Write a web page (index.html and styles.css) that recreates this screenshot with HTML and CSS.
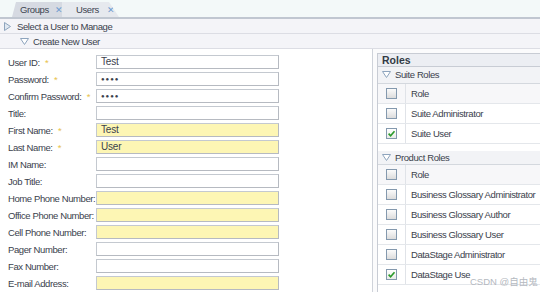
FILE: index.html
```html
<!DOCTYPE html>
<html>
<head>
<meta charset="utf-8">
<link rel="stylesheet" href="styles.css">
</head>
<body>
<div class="tabbar">
  <div class="tab tab-inactive"><span class="tab-label">Groups</span><span class="tab-x">✕</span></div>
  <div class="tab tab-active"><span class="tab-label">Users</span><span class="tab-x">✕</span></div>
</div>
<div class="bar bar-select"><svg class="tri-svg" width="7" height="9" viewBox="0 0 7 9"><path d="M0.5 0.5 L6.5 4.5 L0.5 8.5 Z" fill="#dfe7f1" stroke="#8ea4bd" stroke-width="1"/></svg><span>Select a User to Manage</span></div>
<div class="bar bar-create"><svg class="tri-svg" width="9" height="7" viewBox="0 0 9 7"><path d="M0.5 0.5 L8.5 0.5 L4.5 6.5 Z" fill="#ffffff" stroke="#8ea4bd" stroke-width="1"/></svg><span>Create New User</span></div>
<div class="main">
  <div class="form-panel">
    <div class="form">
      <label class="lbl">User ID: <span class="req">*</span></label><div class="inp">Test</div>
      <label class="lbl">Password: <span class="req">*</span></label><div class="inp dots">●●●●</div>
      <label class="lbl">Confirm Password: <span class="req">*</span></label><div class="inp dots">●●●●</div>
      <label class="lbl">Title:</label><div class="inp"></div>
      <label class="lbl">First Name: <span class="req">*</span></label><div class="inp yellow">Test</div>
      <label class="lbl">Last Name: <span class="req">*</span></label><div class="inp yellow">User</div>
      <label class="lbl">IM Name:</label><div class="inp"></div>
      <label class="lbl">Job Title:</label><div class="inp"></div>
      <label class="lbl">Home Phone Number:</label><div class="inp yellow"></div>
      <label class="lbl">Office Phone Number:</label><div class="inp yellow"></div>
      <label class="lbl">Cell Phone Number:</label><div class="inp yellow"></div>
      <label class="lbl">Pager Number:</label><div class="inp"></div>
      <label class="lbl">Fax Number:</label><div class="inp"></div>
      <label class="lbl">E-mail Address:</label><div class="inp yellow"></div>
    </div>
  </div>
  <div class="roles-panel">
    <div class="roles">
      <div class="roles-title">Roles</div>
      <div class="group-head group-suite"><svg class="tri-svg" width="9" height="7" viewBox="0 0 9 7"><path d="M0.5 0.5 L8.5 0.5 L4.5 6.5 Z" fill="#ffffff" stroke="#8ea4bd" stroke-width="1"/></svg>Suite Roles</div>
      <div class="row row-head"><div class="cbcell"><span class="cb"></span></div><div class="name">Role</div></div>
      <div class="row"><div class="cbcell"><span class="cb"></span></div><div class="name">Suite Administrator</div></div>
      <div class="row"><div class="cbcell"><span class="cb checked"><svg viewBox="0 0 9 9" width="9" height="9"><path d="M1.6 4.6 L3.6 6.8 L7.5 2.2" fill="none" stroke="#2b9a2b" stroke-width="1.6"/></svg></span></div><div class="name">Suite User</div></div>
      <div class="spacer"></div>
      <div class="group-head"><svg class="tri-svg" width="9" height="7" viewBox="0 0 9 7"><path d="M0.5 0.5 L8.5 0.5 L4.5 6.5 Z" fill="#ffffff" stroke="#8ea4bd" stroke-width="1"/></svg>Product Roles</div>
      <div class="row row-head"><div class="cbcell"><span class="cb"></span></div><div class="name">Role</div></div>
      <div class="row"><div class="cbcell"><span class="cb"></span></div><div class="name">Business Glossary Administrator</div></div>
      <div class="row"><div class="cbcell"><span class="cb"></span></div><div class="name">Business Glossary Author</div></div>
      <div class="row"><div class="cbcell"><span class="cb"></span></div><div class="name">Business Glossary User</div></div>
      <div class="row"><div class="cbcell"><span class="cb"></span></div><div class="name">DataStage Administrator</div></div>
      <div class="row"><div class="cbcell"><span class="cb checked"><svg viewBox="0 0 9 9" width="9" height="9"><path d="M1.6 4.6 L3.6 6.8 L7.5 2.2" fill="none" stroke="#2b9a2b" stroke-width="1.6"/></svg></span></div><div class="name name-last">DataStage Use</div></div>
    </div>
    <div class="watermark">CSDN @自由鬼</div>
  </div>
</div>
</body>
</html>
```
FILE: styles.css
```css
html, body {
  margin: 0;
  padding: 0;
  width: 540px;
  height: 292px;
  overflow: hidden;
  background: #ffffff;
  font-family: "Liberation Sans", Arial, sans-serif;
  font-size: 9.5px;
  letter-spacing: -0.4px;
  color: #3a414c;
}

.tabbar {
  height: 17px;
  background: #f3f9f9;
  border-bottom: 2px solid #c0c7d1;
  display: flex;
  align-items: flex-end;
  padding-left: 12px;
}

.tab {
  height: 15px;
  display: flex;
  align-items: center;
  color: #3c4450;
  box-sizing: border-box;
}

.tab-inactive {
  width: 50px;
  background: #d6dae2;
  clip-path: polygon(4px 0, 100% 0, 100% 100%, 0 100%);
  padding-left: 8px;
}

.tab-active {
  width: 57px;
  background: #e6e9ee;
  clip-path: polygon(0 0, 47px 0, 100% 100%, 0 100%);
  padding-left: 14px;
}

.tab-label {
  margin-right: 6px;
}

.tab-active .tab-label {
  margin-right: 8px;
}

.tab-x {
  font-size: 9px;
  letter-spacing: 0;
  color: #6f9cd0;
}

.bar {
  height: 14px;
  background: #f4f4f8;
  border-bottom: 1px solid #dcdde4;
  display: flex;
  align-items: center;
}

.bar-select {
  padding-left: 4px;
}

.bar-select .tri-svg {
  margin-right: 6px;
}

.bar-create {
  padding-left: 20px;
}

.tri-svg {
  display: block;
  margin-right: 4px;
  flex: none;
}

.main {
  display: flex;
  height: 243px;
}

.form-panel {
  width: 372px;
  border-right: 1px solid #cfd3da;
  flex: none;
}

.form {
  display: grid;
  grid-template-columns: 88px 183px;
  grid-auto-rows: 14px;
  row-gap: 3px;
  padding-top: 6px;
  padding-left: 8px;
  align-items: center;
}

.lbl {
  white-space: nowrap;
}

.req {
  color: #e8c24a;
  margin-left: 3px;
}

.inp {
  height: 14px;
  box-sizing: border-box;
  border: 1px solid #c4c9d0;
  border-right-color: #b6bac1;
  border-bottom-color: #b6bac1;
  background: #ffffff;
  padding-left: 4px;
  font-size: 10px;
  letter-spacing: -0.2px;
  line-height: 12px;
}

.inp.yellow {
  background: #fdf6b4;
}

.inp.dots {
  font-size: 6px;
  letter-spacing: 1px;
  line-height: 12px;
}

.roles-panel {
  flex: 1;
  padding-left: 4px;
  padding-top: 4px;
  position: relative;
  background: #fbfbfc;
}

.roles {
  border-left: 1px solid #c8ccd4;
  border-top: 1px solid #c8ccd4;
  background: #ffffff;
  height: 100%;
}

.roles-title {
  height: 12px;
  line-height: 12px;
  font-weight: bold;
  font-size: 10.5px;
  letter-spacing: 0;
  color: #333a44;
  padding-left: 4px;
  background: #eceef3;
  border-bottom: 1px solid #c8ccd4;
}

.group-head {
  height: 13px;
  display: flex;
  align-items: center;
  padding-left: 4px;
  background: #f2f3f6;
  border-bottom: 1px solid #d4d8de;
}

.group-suite {
  height: 17px;
  align-items: flex-start;
  padding-top: 2px;
  box-sizing: border-box;
}

.group-suite .tri-svg {
  margin-top: 2px;
}

.row {
  display: flex;
  height: 20px;
  border-bottom: 1px solid #e4e7eb;
  box-sizing: border-box;
}

.row-head {
  background: #f7f7f9;
}

.cbcell {
  width: 27px;
  flex: none;
  border-right: 1px solid #e0e3e8;
  display: flex;
  align-items: center;
  justify-content: center;
}

.cb {
  width: 9px;
  height: 9px;
  border: 1px solid #8499ae;
  background: linear-gradient(#fbfbfb, #dcdcdc);
  display: flex;
  align-items: center;
  justify-content: center;
}

.cb.checked {
  background: linear-gradient(#ffffff, #e8ece8);
}

.name {
  padding-left: 5px;
  display: flex;
  align-items: center;
  white-space: nowrap;
}

.spacer {
  height: 7px;
}

.watermark {
  position: absolute;
  left: 97px;
  top: 225px;
  font-size: 9.5px;
  letter-spacing: 0;
  color: #b4b8c0;
  font-family: "Liberation Sans", "Noto Sans CJK SC", sans-serif;
  white-space: nowrap;
}
```
